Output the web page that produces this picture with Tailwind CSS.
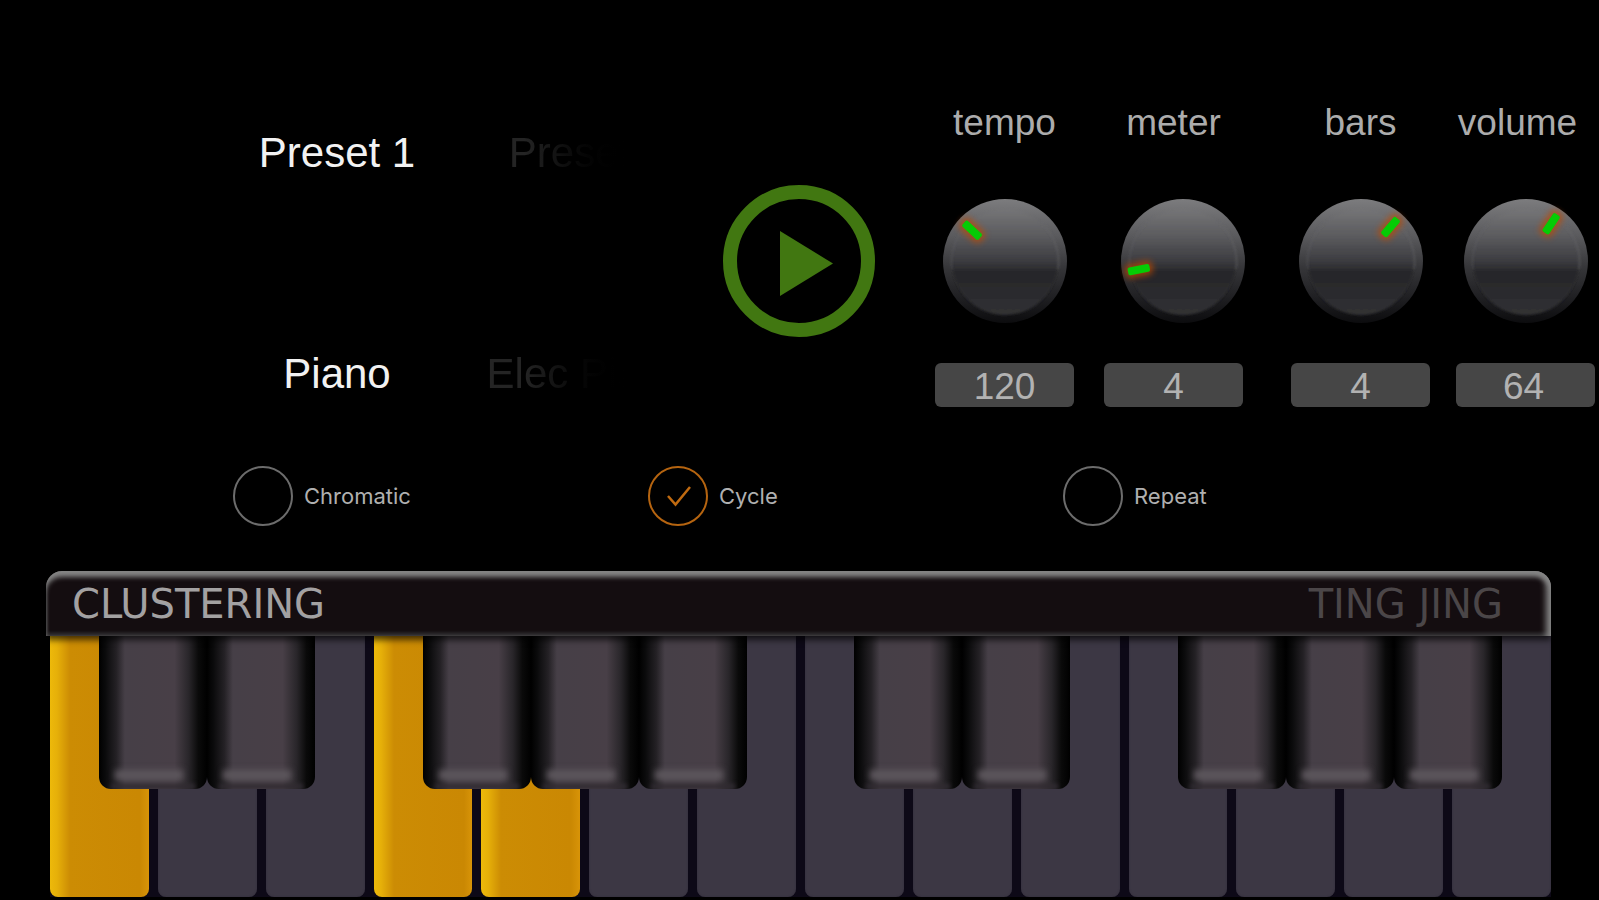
<!DOCTYPE html>
<html lang="en">
<head>
<meta charset="utf-8">
<meta name="viewport" content="width=device-width, initial-scale=1">
<title>Clustering</title>
<script src="https://cdn.jsdelivr.net/npm/@tailwindcss/browser@4"></script>
</head>
<body class="min-h-screen overflow-x-hidden bg-black font-['Liberation_Sans',Arial,sans-serif] text-white">

<!-- Shared knob artwork -->
<svg class="absolute size-0" aria-hidden="true">
  <defs>
    <linearGradient id="rim" x1="0" y1="0" x2="0" y2="1">
      <stop offset="0" stop-color="#7c7c7e"/><stop offset=".3" stop-color="#5a5a5d"/>
      <stop offset=".55" stop-color="#363639"/><stop offset=".8" stop-color="#1f1f22"/><stop offset="1" stop-color="#0c0c0e"/>
    </linearGradient>
    <linearGradient id="face" x1="0" y1="0" x2="0" y2="1">
      <stop offset="0" stop-color="#757577"/><stop offset=".25" stop-color="#5c5c5f"/>
      <stop offset=".48" stop-color="#3e3e42"/><stop offset=".6" stop-color="#262629"/><stop offset="1" stop-color="#313134"/>
    </linearGradient>
    <filter id="glow" x="-150%" y="-80%" width="400%" height="260%"><feGaussianBlur stdDeviation="3"/></filter>
    <filter id="soft" x="-10%" y="-10%" width="120%" height="120%"><feGaussianBlur stdDeviation="1"/></filter>
    <symbol id="knob" viewBox="-63 -63 126 126">
      <circle r="62" fill="url(#rim)"/>
      <circle r="53" cy="1" fill="url(#face)" filter="url(#soft)"/>
      <path d="M37 -38A53.5 53.5 0 0 1 53 8" fill="none" stroke="#69696c" stroke-opacity=".4" stroke-width="2" filter="url(#soft)"/>
      <path d="M-37 -38A53.5 53.5 0 0 0 -53 8" fill="none" stroke="#69696c" stroke-opacity=".25" stroke-width="2" filter="url(#soft)"/>
    </symbol>
    <g id="tick">
      <rect x="-7" y="-59" width="14" height="28" rx="5" fill="#c04a00" opacity=".75" filter="url(#glow)"/>
      <rect x="-4" y="-56" width="8" height="22" rx="2" fill="#05cc05"/>
    </g>
  </defs>
</svg>

<main class="flex min-h-screen flex-col">
  <header class="flex items-start pr-1 pt-[102px]">
    <div class="min-w-0 flex-1 pl-[212px] pt-[27px]">
      <div class="flex max-w-[500px] flex-col gap-[173px] overflow-hidden text-[42px] leading-12 text-[#f2f2f2]">
        <div class="flex" role="group" aria-label="Preset">
          <button class="w-[250px] shrink-0 whitespace-nowrap">Preset 1</button>
          <div class="w-[250px] shrink-0 bg-linear-to-r from-[#242424] from-25% to-black to-68% bg-clip-text text-transparent"><button class="w-full whitespace-nowrap">Preset 2</button></div>
        </div>
        <div class="flex" role="group" aria-label="Instrument">
          <button class="w-[250px] shrink-0 whitespace-nowrap">Piano</button>
          <div class="w-[250px] shrink-0 bg-linear-to-r from-[#242424] from-25% to-black to-68% bg-clip-text text-transparent"><button class="w-full whitespace-nowrap">Elec Piano</button></div>
        </div>
      </div>
    </div>

    <button class="mt-[83px] size-[152px] shrink-0" aria-label="Play">
      <svg viewBox="0 0 152 152" class="size-full"><circle cx="76" cy="76" r="69" fill="none" stroke="#417711" stroke-width="14"/><path d="M57 46L110 78.500L57 111Z" fill="#417711"/></svg>
    </button>

    <div class="ml-[60px] flex shrink-0 text-[37px] text-[#acacac]">
      <div class="flex w-[139px] flex-col">
        <label for="tempo" class="text-center leading-[42px]">tempo</label>
        <div class="mt-[54px] flex justify-center">
          <div class="relative size-[126px]">
            <svg viewBox="-63 -63 126 126" class="size-full"><use href="#knob" x="-63" y="-63" width="126" height="126"/><use href="#tick" transform="rotate(-47)"/></svg>
            <input type="range" min="40" max="240" value="120" aria-label="tempo knob" class="absolute inset-0 size-full opacity-0">
          </div>
        </div>
        <input id="tempo" type="text" value="120" class="mt-[39px] h-11 w-full rounded-md bg-[#464646] pt-[3px] text-center leading-10 text-[#b2b2b2]">
      </div>
      <div class="ml-[30px] flex w-[139px] flex-col">
        <label for="meter" class="text-center leading-[42px]">meter</label>
        <div class="mt-[54px] flex pl-4">
          <div class="relative size-[126px] shrink-0">
            <svg viewBox="-63 -63 126 126" class="size-full"><use href="#knob" x="-63" y="-63" width="126" height="126"/><use href="#tick" transform="rotate(-101)"/></svg>
            <input type="range" min="1" max="16" value="4" aria-label="meter knob" class="absolute inset-0 size-full opacity-0">
          </div>
        </div>
        <input id="meter" type="text" value="4" class="mt-[39px] h-11 w-full rounded-md bg-[#464646] pt-[3px] text-center leading-10 text-[#b2b2b2]">
      </div>
      <div class="ml-12 flex w-[139px] flex-col">
        <label for="bars" class="text-center leading-[42px]">bars</label>
        <div class="mt-[54px] flex justify-center">
          <div class="relative size-[126px]">
            <svg viewBox="-63 -63 126 126" class="size-full"><use href="#knob" x="-63" y="-63" width="126" height="126"/><use href="#tick" transform="rotate(41)"/></svg>
            <input type="range" min="1" max="8" value="4" aria-label="bars knob" class="absolute inset-0 size-full opacity-0">
          </div>
        </div>
        <input id="bars" type="text" value="4" class="mt-[39px] h-11 w-full rounded-md bg-[#464646] pt-[3px] text-center leading-10 text-[#b2b2b2]">
      </div>
      <div class="ml-[26px] flex w-[139px] flex-col">
        <label for="volume" class="pr-4 text-center leading-[42px]">volume</label>
        <div class="mt-[54px] flex justify-center">
          <div class="relative size-[126px]">
            <svg viewBox="-63 -63 126 126" class="size-full"><use href="#knob" x="-63" y="-63" width="126" height="126"/><use href="#tick" transform="rotate(34)"/></svg>
            <input type="range" min="0" max="127" value="64" aria-label="volume knob" class="absolute inset-0 size-full opacity-0">
          </div>
        </div>
        <input id="volume" type="text" value="64" class="mt-[39px] h-11 w-full rounded-md bg-[#464646] pr-1 pt-[3px] text-center leading-10 text-[#b2b2b2]">
      </div>
    </div>
  </header>

  <section class="mt-[59px] grid grid-cols-3 pl-[233px] pr-[121px] font-['Inter',sans-serif] text-[22px] text-[#b0b0b0]" aria-label="Modes">
    <label class="flex items-center gap-[11px]">
      <input type="checkbox" class="size-[60px] appearance-none rounded-full border-2 border-[#6c6c6c]">Chromatic
    </label>
    <label class="flex items-center gap-[11px]">
      <span class="relative size-[60px]">
        <input type="checkbox" checked class="peer block size-full appearance-none rounded-full border-2 border-[#6c6c6c] checked:border-[#b56410]">
        <svg viewBox="0 0 60 60" class="pointer-events-none absolute inset-0 hidden size-full peer-checked:block"><path d="M20 30L27.500 38.500L42 21" fill="none" stroke="#c06a10" stroke-width="2.500"/></svg>
      </span>Cycle
    </label>
    <label class="flex items-center gap-[11px]">
      <input type="checkbox" class="size-[60px] appearance-none rounded-full border-2 border-[#6c6c6c]">Repeat
    </label>
  </section>

  <section class="mt-[45px] flex flex-1 flex-col pb-[3px] pl-[46px] pr-12" aria-label="Keyboard">
    <div class="relative z-20 flex h-[65px] items-center justify-between rounded-t-2xl bg-[#140d10] pl-[26px] pr-12 font-['DejaVu_Sans',sans-serif] text-[40px] leading-12 shadow-[inset_0_7px_5px_-1px_#858585,inset_-7px_0_6px_-2px_#858585,inset_2px_0_2px_#2a2729,inset_0_-4px_3px_#222022,0_4px_6px_#000000aa]">
      <h1 class="text-[#a3a1a2]">CLUSTERING</h1>
      <p class="text-[#4b4648]">TING JING</p>
    </div>
    <div id="keys" class="relative ml-1 flex min-h-[261px] flex-1 gap-[9px] bg-[#0d0917]">
      <div id="sharps" class="pointer-events-none absolute inset-x-[49px] top-0 z-10 grid h-[153px] grid-cols-13"></div>
    </div>
  </section>
</main>

<script>
  const keys = document.getElementById('keys');
  const sharps = document.getElementById('sharps');
  const gold = 'flex-1 rounded-b-lg bg-[linear-gradient(to_right,#edb90a_0px,#e6b009_7px,#cc8c04_20px,#ca8803_90px,#d89408_100%)]';
  const plain = 'flex-1 rounded-b-lg bg-[#3c3744] shadow-[inset_0_0_2px_#302c3a]';
  'C3 D3 E3 F3 G3 A3 B3 C4 D4 E4 F4 G4 A4 B4'.split(' ').forEach((note, i) => {
    const key = document.createElement('button');
    key.className = [0, 3, 4].includes(i) ? gold : plain;
    key.setAttribute('aria-label', note);
    keys.append(key);
  });
  const black = 'pointer-events-auto relative overflow-hidden rounded-b-xl bg-[linear-gradient(to_right,#000_0%,#0b0b0c_6%,#242125_16%,#463f47_24%,#483f47_70%,#29262a_83%,#0a0a0a_92%,#000_100%)]';
  for (let i = 0; i < 13; i++) {
    const sharp = document.createElement([2, 6, 9].includes(i) ? 'span' : 'button');
    if (sharp.tagName === 'BUTTON') {
      sharp.className = black;
      sharp.setAttribute('aria-label', ['C♯3', 'D♯3', '', 'F♯3', 'G♯3', 'A♯3', '', 'C♯4', 'D♯4', '', 'F♯4', 'G♯4', 'A♯4'][i]);
      sharp.innerHTML = '<span class="absolute left-4 right-6 bottom-[9px] h-[10px] bg-[#5c565c] blur-[3px]"></span><span class="absolute inset-x-3 bottom-0 h-[5px] bg-[#302b31] blur-[2px]"></span>';
    }
    sharps.append(sharp);
  }
</script>
</body>
</html>
